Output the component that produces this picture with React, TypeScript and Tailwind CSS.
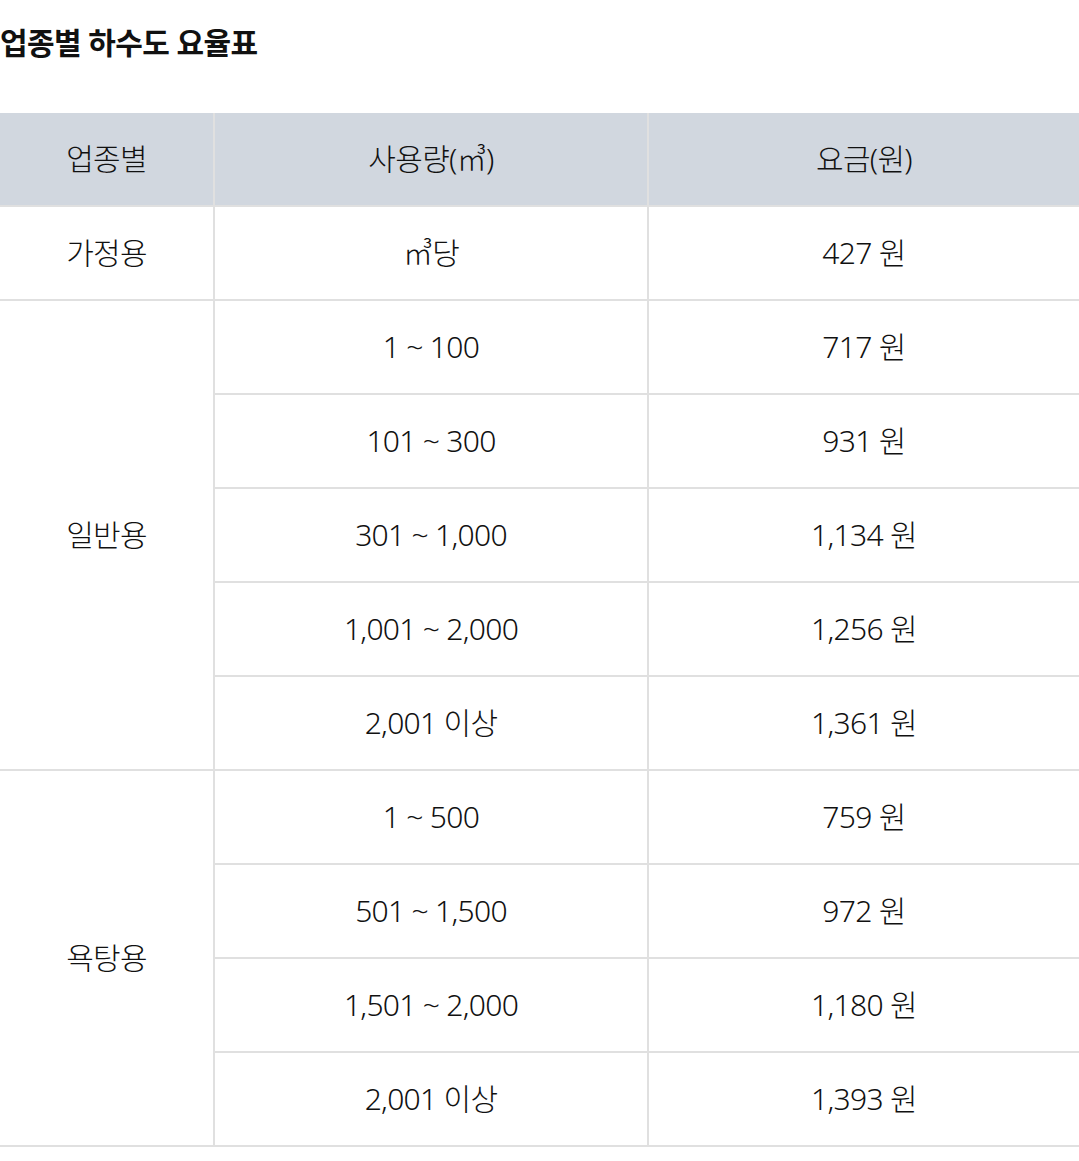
import React from "react";

const cell = "flex items-center justify-center bg-white h-[92px]";
const head = "flex items-center justify-center bg-[#d1d7df] h-[92px]";

const general = [
  ["1 ~ 100", "717 원"],
  ["101 ~ 300", "931 원"],
  ["301 ~ 1,000", "1,134 원"],
  ["1,001 ~ 2,000", "1,256 원"],
  ["2,001 이상", "1,361 원"],
];

const bath = [
  ["1 ~ 500", "759 원"],
  ["501 ~ 1,500", "972 원"],
  ["1,501 ~ 2,000", "1,180 원"],
  ["2,001 이상", "1,393 원"],
];

export default function App() {
  return (
    <div
      className="w-[1079px] bg-white text-[#111111]"
      style={{ fontFamily: '"Noto Sans", "Noto Sans CJK KR", sans-serif' }}
    >
      <h2 className="pt-[26px] text-[30px] leading-[34px] font-bold tracking-[-0.6px] text-[#111111]">
        업종별 하수도 요율표
      </h2>
      <div className="mt-[53px] grid grid-cols-[213px_432px_1fr] gap-[2px] bg-[#e0e0e0] pb-[2px] text-[30px] font-light tracking-[-0.7px] leading-none">
        <div className={head}>업종별</div>
        <div className={head}>사용량(㎥)</div>
        <div className={head}>요금(원)</div>

        <div className={cell}>가정용</div>
        <div className={cell}>㎥당</div>
        <div className={cell}>427 원</div>

        <div className="row-span-5 flex items-center justify-center bg-white">일반용</div>
        {general.map(([a, b]) => (
          <React.Fragment key={a}>
            <div className={cell}>{a}</div>
            <div className={cell}>{b}</div>
          </React.Fragment>
        ))}

        <div className="row-span-4 flex items-center justify-center bg-white">욕탕용</div>
        {bath.map(([a, b]) => (
          <React.Fragment key={a}>
            <div className={cell}>{a}</div>
            <div className={cell}>{b}</div>
          </React.Fragment>
        ))}
      </div>
    </div>
  );
}
